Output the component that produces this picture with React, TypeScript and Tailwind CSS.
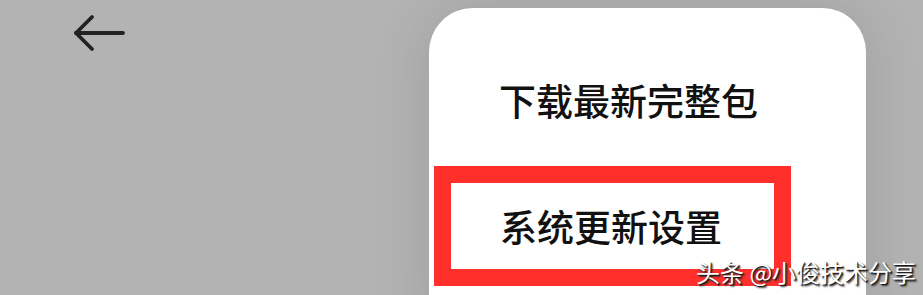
const cjk = { fontFamily: '"Noto Sans CJK SC", "Noto Sans", sans-serif' };

function BackArrow() {
  return (
    <svg width="56" height="40" viewBox="0 0 56 40" fill="none" stroke="#222" strokeWidth="3.8" strokeLinecap="round" strokeLinejoin="round">
      <path d="M4 20H51" />
      <path d="M20 4L4 20L20 36" />
    </svg>
  );
}

function UpdateMenu() {
  return (
    <div className="ml-[429px] mt-[8px] h-[320px] w-[437px] rounded-t-[44px] bg-white shadow-[0_0_60px_rgba(0,0,0,0.12)]">
      <div className="pl-[70px] pt-[62px] text-[37px] font-medium leading-[60px] text-[#111]" style={cjk}>
        下载最新完整包
      </div>
      <div className="ml-[5px] mt-[36px] h-[120px] w-[357px] border-[17px] border-[#ff302c] pl-[49px] pt-[19px]">
        <span className="text-[37px] font-medium leading-[48px] text-[#111]" style={cjk}>
          系统更新设置
        </span>
      </div>
    </div>
  );
}

export default function App() {
  return (
    <div className="relative flex h-[295px] w-[923px] overflow-hidden bg-[#b3b3b3]">
      <div className="absolute left-[72px] top-[13px]">
        <BackArrow />
      </div>
      <UpdateMenu />
      <div
        className="absolute left-[696px] top-[256px] text-[24px] leading-[32px] text-white [text-shadow:1px_1px_1px_#111,2px_2px_2px_#333]"
        style={cjk}
      >
        头条 @小俊技术分享
      </div>
    </div>
  );
}
